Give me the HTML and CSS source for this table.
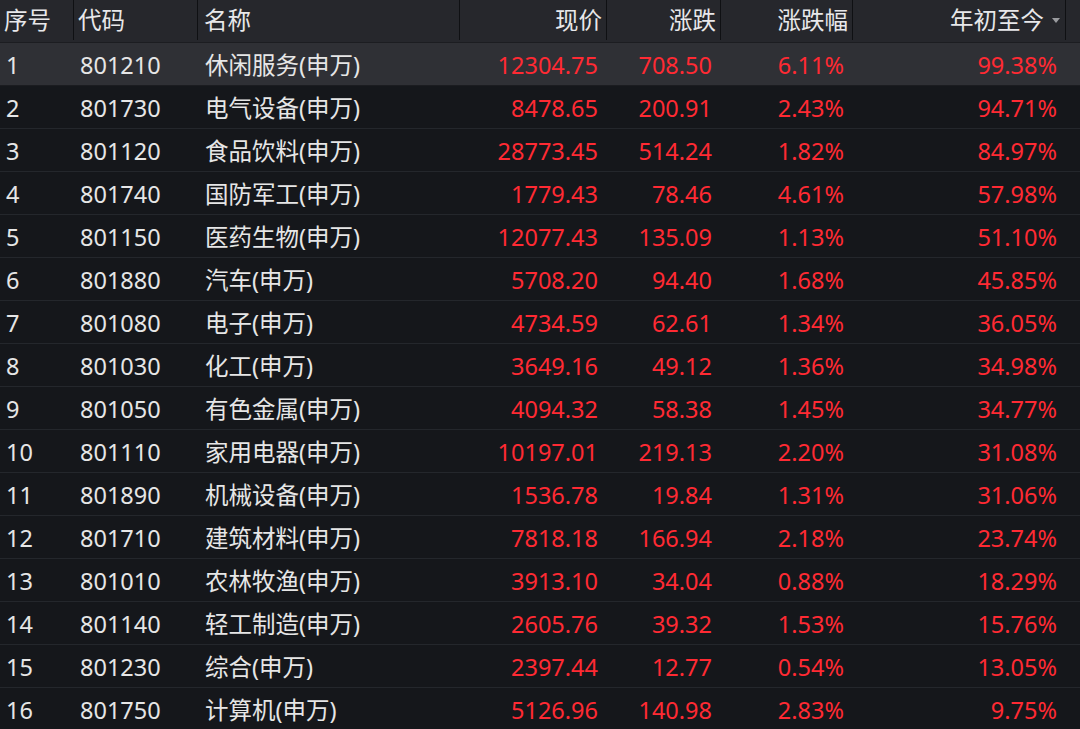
FILE: index.html
```html
<!DOCTYPE html>
<html lang="zh-CN">
<head>
<meta charset="utf-8">
<title>申万行业</title>
<link rel="stylesheet" href="styles.css">
</head>
<body>
<div class="board">
  <div class="row head">
    <div class="cell l sep">序号</div>
    <div class="cell l sep">代码</div>
    <div class="cell l name sep">名称</div>
    <div class="cell r sep">现价</div>
    <div class="cell r sep">涨跌</div>
    <div class="cell r sep">涨跌幅</div>
    <div class="cell r sep sort">年初至今<span class="arrow"></span></div>
    <div class="cell"></div>
  </div>
  <div class="row sel"><div class="cell l">1</div><div class="cell l">801210</div><div class="cell l name">休闲服务(申万)</div><div class="cell r up">12304.75</div><div class="cell r up">708.50</div><div class="cell r up">6.11%</div><div class="cell r up last">99.38%</div><div class="cell"></div></div>
  <div class="row"><div class="cell l">2</div><div class="cell l">801730</div><div class="cell l name">电气设备(申万)</div><div class="cell r up">8478.65</div><div class="cell r up">200.91</div><div class="cell r up">2.43%</div><div class="cell r up last">94.71%</div><div class="cell"></div></div>
  <div class="row"><div class="cell l">3</div><div class="cell l">801120</div><div class="cell l name">食品饮料(申万)</div><div class="cell r up">28773.45</div><div class="cell r up">514.24</div><div class="cell r up">1.82%</div><div class="cell r up last">84.97%</div><div class="cell"></div></div>
  <div class="row"><div class="cell l">4</div><div class="cell l">801740</div><div class="cell l name">国防军工(申万)</div><div class="cell r up">1779.43</div><div class="cell r up">78.46</div><div class="cell r up">4.61%</div><div class="cell r up last">57.98%</div><div class="cell"></div></div>
  <div class="row"><div class="cell l">5</div><div class="cell l">801150</div><div class="cell l name">医药生物(申万)</div><div class="cell r up">12077.43</div><div class="cell r up">135.09</div><div class="cell r up">1.13%</div><div class="cell r up last">51.10%</div><div class="cell"></div></div>
  <div class="row"><div class="cell l">6</div><div class="cell l">801880</div><div class="cell l name">汽车(申万)</div><div class="cell r up">5708.20</div><div class="cell r up">94.40</div><div class="cell r up">1.68%</div><div class="cell r up last">45.85%</div><div class="cell"></div></div>
  <div class="row"><div class="cell l">7</div><div class="cell l">801080</div><div class="cell l name">电子(申万)</div><div class="cell r up">4734.59</div><div class="cell r up">62.61</div><div class="cell r up">1.34%</div><div class="cell r up last">36.05%</div><div class="cell"></div></div>
  <div class="row"><div class="cell l">8</div><div class="cell l">801030</div><div class="cell l name">化工(申万)</div><div class="cell r up">3649.16</div><div class="cell r up">49.12</div><div class="cell r up">1.36%</div><div class="cell r up last">34.98%</div><div class="cell"></div></div>
  <div class="row"><div class="cell l">9</div><div class="cell l">801050</div><div class="cell l name">有色金属(申万)</div><div class="cell r up">4094.32</div><div class="cell r up">58.38</div><div class="cell r up">1.45%</div><div class="cell r up last">34.77%</div><div class="cell"></div></div>
  <div class="row"><div class="cell l">10</div><div class="cell l">801110</div><div class="cell l name">家用电器(申万)</div><div class="cell r up">10197.01</div><div class="cell r up">219.13</div><div class="cell r up">2.20%</div><div class="cell r up last">31.08%</div><div class="cell"></div></div>
  <div class="row"><div class="cell l">11</div><div class="cell l">801890</div><div class="cell l name">机械设备(申万)</div><div class="cell r up">1536.78</div><div class="cell r up">19.84</div><div class="cell r up">1.31%</div><div class="cell r up last">31.06%</div><div class="cell"></div></div>
  <div class="row"><div class="cell l">12</div><div class="cell l">801710</div><div class="cell l name">建筑材料(申万)</div><div class="cell r up">7818.18</div><div class="cell r up">166.94</div><div class="cell r up">2.18%</div><div class="cell r up last">23.74%</div><div class="cell"></div></div>
  <div class="row"><div class="cell l">13</div><div class="cell l">801010</div><div class="cell l name">农林牧渔(申万)</div><div class="cell r up">3913.10</div><div class="cell r up">34.04</div><div class="cell r up">0.88%</div><div class="cell r up last">18.29%</div><div class="cell"></div></div>
  <div class="row"><div class="cell l">14</div><div class="cell l">801140</div><div class="cell l name">轻工制造(申万)</div><div class="cell r up">2605.76</div><div class="cell r up">39.32</div><div class="cell r up">1.53%</div><div class="cell r up last">15.76%</div><div class="cell"></div></div>
  <div class="row"><div class="cell l">15</div><div class="cell l">801230</div><div class="cell l name">综合(申万)</div><div class="cell r up">2397.44</div><div class="cell r up">12.77</div><div class="cell r up">0.54%</div><div class="cell r up last">13.05%</div><div class="cell"></div></div>
  <div class="row"><div class="cell l">16</div><div class="cell l">801750</div><div class="cell l name">计算机(申万)</div><div class="cell r up">5126.96</div><div class="cell r up">140.98</div><div class="cell r up">2.83%</div><div class="cell r up last">9.75%</div><div class="cell"></div></div>
</div>
</body>
</html>
```

FILE: styles.css
```css
html, body {
  margin: 0;
  padding: 0;
  background: #15171b;
  overflow: hidden;
}
body {
  width: 1080px;
  height: 729px;
  font-family: "Noto Sans", "Noto Sans CJK SC", sans-serif;
  font-size: 23.5px;
  color: #e6e6e6;
}
.board {
  display: flex;
  flex-direction: column;
}
.row {
  display: grid;
  grid-template-columns: 74px 124px 262px 147px 114px 132px 213px 14px;
  height: 42px;
  border-bottom: 1px solid #24272c;
  background: #15171b;
}
.row .cell {
  padding-top: 4px;
}
.row.head {
  height: 42px;
  background: #26272c;
  border-bottom: 1px solid #1c1d21;
}
.row.sel {
  background: #2f3035;
  border-bottom-color: #1b1c20;
}
.cell {
  display: flex;
  align-items: center;
  white-space: nowrap;
  line-height: 1;
  position: relative;
  box-sizing: border-box;
}
.cell.l {
  justify-content: flex-start;
  padding-left: 6px;
}
.cell.name {
  padding-left: 7px;
}
.cell.r {
  justify-content: flex-end;
  padding-right: 9px;
}
.head .cell.l {
  padding-left: 4px;
}
.head .cell.name {
  padding-left: 6px;
}
.head .cell.r {
  padding-right: 5px;
}
.head .cell.sort {
  padding-right: 6px;
}
.cell.sep::after {
  content: "";
  position: absolute;
  right: 0;
  top: 0;
  width: 1px;
  height: 40px;
  background: #0f1013;
}
.row.head .cell {
  color: #e8e8ea;
  padding-top: 0;
  padding-bottom: 0;
}
.arrow {
  display: inline-block;
  width: 0;
  height: 0;
  margin-left: 8px;
  margin-bottom: 2px;
  border-left: 4px solid transparent;
  border-right: 4px solid transparent;
  border-top: 5px solid #9a9b9f;
}
.up {
  color: #ff2a33;
}
.cell.last {
  padding-right: 9px;
}
```
